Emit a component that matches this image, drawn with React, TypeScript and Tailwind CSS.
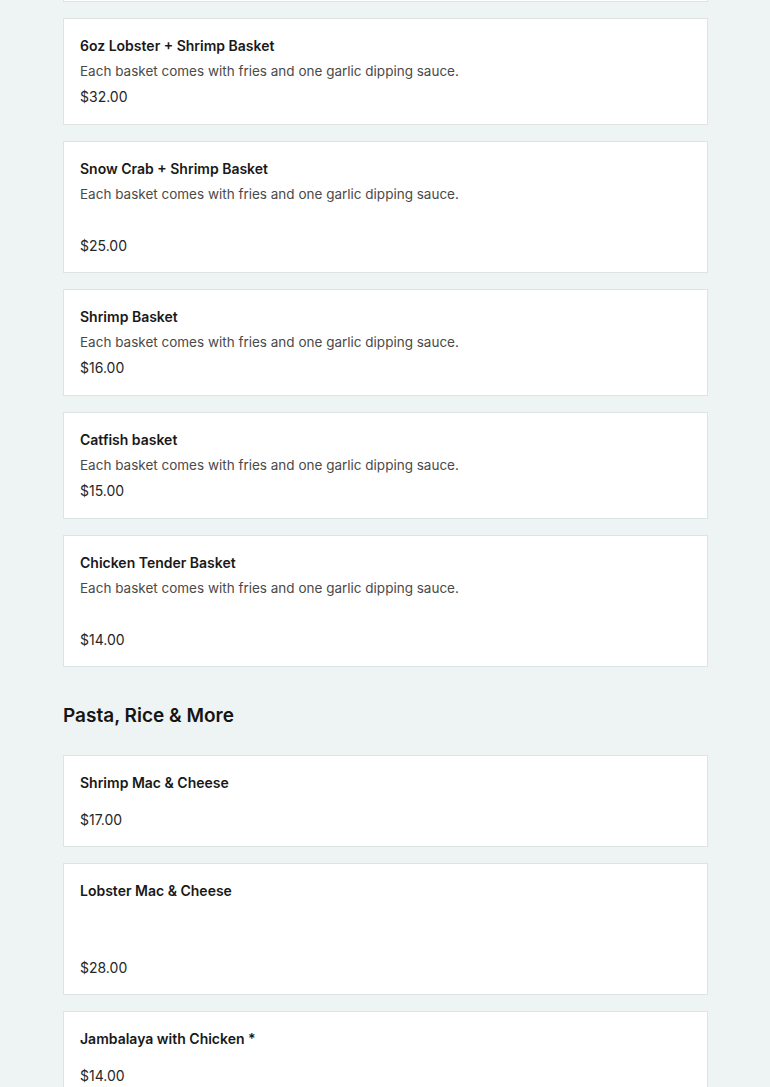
type Item = {
  name: string;
  desc?: string;
  price: string;
  tall?: boolean;
};

const DESC = "Each basket comes with fries and one garlic dipping sauce.";

const baskets: Item[] = [
  { name: "6oz Lobster + Shrimp Basket", desc: DESC, price: "$32.00" },
  { name: "Snow Crab + Shrimp Basket", desc: DESC, price: "$25.00", tall: true },
  { name: "Shrimp Basket", desc: DESC, price: "$16.00" },
  { name: "Catfish basket", desc: DESC, price: "$15.00" },
  { name: "Chicken Tender Basket", desc: DESC, price: "$14.00", tall: true },
];

const pasta: Item[] = [
  { name: "Shrimp Mac & Cheese", price: "$17.00" },
  { name: "Lobster Mac & Cheese", price: "$28.00", tall: true },
  { name: "Jambalaya with Chicken *", price: "$14.00" },
];

function MenuCard({ item }: { item: Item }) {
  return (
    <div
      className={`flex flex-col border border-[#dde4e4] bg-white px-4 pt-[17px] ${
        item.tall ? "min-h-[132px] pb-4" : item.desc ? "pb-[17px]" : "pb-4"
      }`}
    >
      <div>
        <h3 className="text-[14px] leading-5 font-semibold text-[#191919]">
          {item.name}
        </h3>
        {item.desc && (
          <p className="mt-[5px] text-[13.5px] leading-5 text-[#4a4a4a]">
            {item.desc}
          </p>
        )}
      </div>
      <p
        className={`text-[14px] leading-5 text-[#262626] ${
          item.tall ? "mt-auto pt-[6px]" : item.desc ? "mt-[6px]" : "mt-[17px]"
        }`}
      >
        {item.price}
      </p>
    </div>
  );
}

export default function App() {
  return (
    <div
      className="min-h-[1087px] bg-[#eef3f3]"
      style={{ fontFamily: "Inter, 'Liberation Sans', sans-serif" }}
    >
      <div className="ml-[63px] w-[645px]">
        {/* tail of previous card */}
        <div className="h-[2px] border-x border-b border-[#dde4e4] bg-white" />

        <div className="mt-4 flex flex-col gap-4">
          {baskets.map((item) => (
            <MenuCard key={item.name} item={item} />
          ))}
        </div>

        <h2 className="mt-[35px] mb-[25px] text-[19px] leading-7 font-semibold text-[#151515]">
          Pasta, Rice &amp; More
        </h2>

        <div className="flex flex-col gap-4">
          {pasta.map((item) => (
            <MenuCard key={item.name} item={item} />
          ))}
        </div>
      </div>
    </div>
  );
}
